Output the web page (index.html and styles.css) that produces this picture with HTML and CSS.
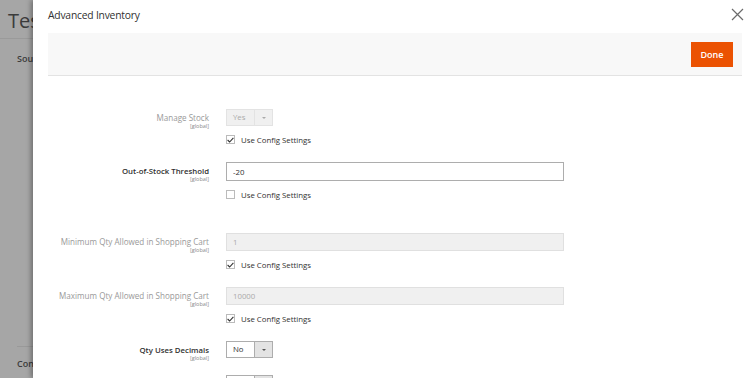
FILE: index.html
```html
<!DOCTYPE html>
<html>
<head>
    <link rel="stylesheet" href="styles.css">
</head>
<body>
<div class="page">
    <div class="page-title">Test Product</div>
    <div class="page-section page-section-grow">Sources</div>
    <div class="page-section page-section-bottom">Configurations</div>
</div>

<aside class="modal">
    <header class="modal-header">
        <h1 class="modal-title">Advanced Inventory</h1>
        <button class="modal-close" type="button">
            <svg width="13" height="13" viewBox="0 0 13 13">
                <path d="M1 1 L12 12 M12 1 L1 12" stroke="#6b6b6b" stroke-width="1.2" fill="none"/>
            </svg>
        </button>
    </header>

    <div class="modal-content">
        <div class="page-actions">
            <button class="btn-primary" type="button">Done</button>
        </div>

        <div class="form">
            <div class="field">
                <div class="field-label is-disabled">
                    <span>Manage Stock</span>
                    <small>[global]</small>
                </div>
                <div class="field-control">
                    <div class="select is-disabled"><span>Yes</span><i class="select-arrow"></i></div>
                    <label class="check">
                        <span class="check-box">
                            <svg width="7" height="6" viewBox="0 0 7 6"><path d="M0.6 3 L2.6 5 L6.4 0.8" stroke="#303030" stroke-width="1.1" fill="none"/></svg>
                        </span>
                        Use Config Settings
                    </label>
                </div>
            </div>

            <div class="field">
                <div class="field-label">
                    <span>Out-of-Stock Threshold</span>
                    <small>[global]</small>
                </div>
                <div class="field-control">
                    <input class="input" type="text" value="-20">
                    <label class="check">
                        <span class="check-box"></span>
                        Use Config Settings
                    </label>
                </div>
            </div>

            <div class="field field-spaced">
                <div class="field-label is-disabled">
                    <span>Minimum Qty Allowed in Shopping Cart</span>
                    <small>[global]</small>
                </div>
                <div class="field-control">
                    <input class="input" type="text" value="1" disabled>
                    <label class="check">
                        <span class="check-box">
                            <svg width="7" height="6" viewBox="0 0 7 6"><path d="M0.6 3 L2.6 5 L6.4 0.8" stroke="#303030" stroke-width="1.1" fill="none"/></svg>
                        </span>
                        Use Config Settings
                    </label>
                </div>
            </div>

            <div class="field">
                <div class="field-label is-disabled">
                    <span>Maximum Qty Allowed in Shopping Cart</span>
                    <small>[global]</small>
                </div>
                <div class="field-control">
                    <input class="input" type="text" value="10000" disabled>
                    <label class="check">
                        <span class="check-box">
                            <svg width="7" height="6" viewBox="0 0 7 6"><path d="M0.6 3 L2.6 5 L6.4 0.8" stroke="#303030" stroke-width="1.1" fill="none"/></svg>
                        </span>
                        Use Config Settings
                    </label>
                </div>
            </div>

            <div class="field field-compact">
                <div class="field-label">
                    <span>Qty Uses Decimals</span>
                    <small>[global]</small>
                </div>
                <div class="field-control">
                    <div class="select"><span>No</span><i class="select-arrow"></i></div>
                </div>
            </div>

            <div class="field">
                <div class="field-label">
                    <span>Allow Multiple Boxes for Shipping</span>
                    <small>[global]</small>
                </div>
                <div class="field-control">
                    <div class="select"><span>Yes</span><i class="select-arrow"></i></div>
                </div>
            </div>
        </div>
    </div>
</aside>
</body>
</html>
```

FILE: styles.css
```css
html, body {
    margin: 0;
    height: 100%;
    overflow: hidden;
}

body {
    font-family: "Open Sans", "Liberation Sans", sans-serif;
    color: #303030;
    position: relative;
    background: #a6a6a6;
}

/* page behind the slide-out, dimmed */
.page {
    width: 33px;
    height: 100%;
    overflow: hidden;
    display: flex;
    flex-direction: column;
    background: #a6a6a6;
    color: #3b3b3b;
}

.page-title {
    font-size: 20px;
    padding: 7px 0 0 8px;
    height: 31px;
    border-bottom: 1px solid #9a9a9a;
    white-space: nowrap;
}

.page-section {
    font-size: 9px;
    font-weight: 600;
    margin-left: 17px;
    white-space: nowrap;
}

.page-section-grow {
    flex: 1;
    padding-top: 13px;
}

.page-section-bottom {
    border-top: 1px solid #999;
    padding: 10px 0 8px;
}

/* slide-out modal */
.modal {
    position: absolute;
    top: 0;
    bottom: 0;
    left: 33px;
    right: 0;
    background: #fff;
    box-shadow: -2px 0 5px rgba(0, 0, 0, 0.35);
    padding: 0 12px 0 15px;
    overflow: hidden;
}

.modal-header {
    height: 33px;
    display: flex;
    align-items: center;
    justify-content: space-between;
}

.modal-title {
    margin: 0;
    font-size: 10.3px;
    letter-spacing: -0.2px;
    font-weight: 400;
    color: #303030;
    padding-bottom: 4px;
}

.modal-close {
    border: 0;
    background: none;
    padding: 0;
    margin-right: -2px;
    margin-bottom: 5px;
    display: flex;
}

.page-actions {
    height: 43px;
    background: #f8f8f8;
    border-bottom: 1px solid #e3e3e3;
    box-sizing: border-box;
    display: flex;
    align-items: center;
    justify-content: flex-end;
    padding-right: 9px;
}

.btn-primary {
    background: #eb5202;
    border: 1px solid #eb5202;
    color: #fff;
    font-family: inherit;
    font-size: 9px;
    font-weight: 600;
    height: 25px;
    width: 42px;
    padding: 0;
}

/* form */
.form {
    padding-top: 33px;
}

.field {
    display: flex;
    gap: 17px;
    margin-bottom: 18px;
}

.field-spaced {
    margin-top: 34px;
}

.field-compact {
    margin-bottom: 13px;
}

.field-label {
    width: 161px;
    flex: none;
    text-align: right;
    display: flex;
    flex-direction: column;
    font-size: 7.8px;
    font-weight: 600;
    color: #303030;
    padding-top: 4px;
}

.field-label span {
    line-height: 10px;
    white-space: nowrap;
}

.field-label small {
    font-size: 5.5px;
    font-weight: 400;
    color: #8a8a8a;
    line-height: 7px;
}

.field-label.is-disabled {
    font-weight: 400;
    font-size: 8.1px;
    color: #999;
}

.field-control {
    display: flex;
    flex-direction: column;
    align-items: flex-start;
    gap: 9px;
}

.input {
    width: 338px;
    height: 19px;
    box-sizing: border-box;
    border: 1px solid #adadad;
    font-family: inherit;
    font-size: 7.8px;
    color: #303030;
    padding: 0 6px;
    margin: 0;
    background: #fff;
}

.input:disabled {
    background: #f0f0f0;
    border-color: #e0e0e0;
    color: #aaa;
    height: 18px;
}

.select {
    width: 47px;
    height: 17px;
    box-sizing: border-box;
    border: 1px solid #adadad;
    display: flex;
    font-size: 7.8px;
    color: #303030;
    background: #fff;
}

.select span {
    flex: 1;
    padding-left: 6px;
    line-height: 15px;
}

.select-arrow {
    width: 17px;
    background: #e3e3e3;
    border-left: 1px solid #adadad;
    position: relative;
}

.select-arrow::after {
    content: "";
    position: absolute;
    left: 7px;
    top: 7px;
    border-left: 2px solid transparent;
    border-right: 2px solid transparent;
    border-top: 2px solid #555;
}

.select.is-disabled {
    background: #f0f0f0;
    border-color: #e3e3e3;
    color: #aaa;
}

.select.is-disabled .select-arrow {
    background: #f0f0f0;
    border-left-color: #e3e3e3;
}

.select.is-disabled .select-arrow::after {
    border-top-color: #aaa;
}

.check {
    display: flex;
    align-items: center;
    gap: 6px;
    font-size: 7.8px;
    color: #303030;
    height: 9px;
}

.check-box {
    width: 9px;
    height: 9px;
    box-sizing: border-box;
    border: 1px solid #bbb;
    background: #fff;
    display: flex;
    align-items: center;
    justify-content: center;
}
```
